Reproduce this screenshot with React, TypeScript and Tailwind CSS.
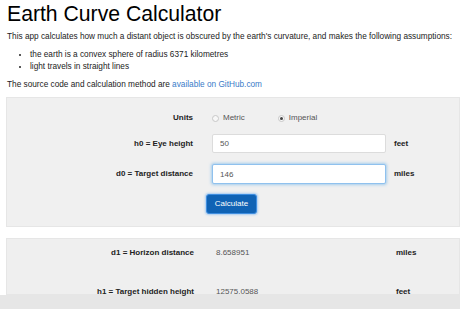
import React from 'react';

const FormRow: React.FC<{ label: string; unit: string; value: string; focused?: boolean; h: string }> = ({ label, unit, value, focused, h }) => (
  <div className={`flex items-center ${h}`}>
    <label className="w-[187px] shrink-0 text-right font-bold">{label}</label>
    <input
      readOnly
      value={value}
      className={`ml-[19px] h-full w-[174px] rounded-[2px] border bg-white px-[7px] text-[8px] text-[#555] outline-none ${
        focused ? 'border-[#8fc1ee] shadow-[0_0_3px_1px_rgba(102,175,233,0.55)]' : 'border-[#dcdcdc]'
      }`}
    />
    <span className="ml-[8px] font-bold">{unit}</span>
  </div>
);

const ResultRow: React.FC<{ label: string; value: string; unit: string }> = ({ label, value, unit }) => (
  <div className="flex items-center">
    <span className="w-[187px] shrink-0 text-right font-bold">{label}</span>
    <span className="ml-[22px] w-[180px] shrink-0 text-[#555]">{value}</span>
    <span className="font-bold">{unit}</span>
  </div>
);

export default function App() {
  return (
    <div className="h-[309px] w-[460px] overflow-hidden bg-white font-['Liberation_Sans',Arial,sans-serif] text-[8px] leading-[12px] text-[#222]">
      <div className="pl-[7px] pr-[4px]">
        <h1 className="pt-[2px] text-[21.2px] leading-[24px] text-black">Earth Curve Calculator</h1>
        <p className="mt-[5px] text-[8.25px]">
          This app calculates how much a distant object is obscured by the earth's curvature, and makes the following assumptions:
        </p>
        <ul className="mt-[6px] list-disc pl-[23px] text-[8.25px]">
          <li>the earth is a convex sphere of radius 6371 kilometres</li>
          <li>light travels in straight lines</li>
        </ul>
        <p className="mt-[6px] text-[8.25px]">
          The source code and calculation method are{' '}
          <a className="text-[#3a7bc8]">available on GitHub.com</a>
        </p>
      </div>

      <div className="ml-[6px] mt-[6px] h-[130px] border border-[#e6e6e6] bg-[#f0f0f0] pt-[13px]">
        <div className="flex h-[14px] items-center">
          <span className="w-[186px] shrink-0 text-right font-bold">Units</span>
          <span className="ml-[19px] flex items-center gap-[4px] text-[#555]">
            <span className="inline-block h-[7px] w-[7px] rounded-full border border-[#c8c8c8] bg-[#f7f7f7]" />
            Metric
          </span>
          <span className="ml-[33px] flex items-center gap-[4px] text-[#555]">
            <span className="flex h-[7px] w-[7px] items-center justify-center rounded-full border border-[#c8c8c8] bg-[#f7f7f7]">
              <span className="h-[3px] w-[3px] rounded-full bg-[#444]" />
            </span>
            Imperial
          </span>
        </div>
        <div className="-ml-px mt-[9px]">
          <FormRow label="h0 = Eye height" unit="feet" value="50" h="h-[19px]" />
        </div>
        <div className="-ml-px mt-[11px]">
          <FormRow label="d0 = Target distance" unit="miles" value="146" focused h="h-[20px]" />
        </div>
        <div className="ml-[199px] mt-[10px]">
          <button className="h-[20px] w-[51px] rounded-[3px] border border-[#3f8ee0] bg-[#1063b5] text-[8px] text-white shadow-[0_0_2px_1px_rgba(120,180,240,0.6)]">
            Calculate
          </button>
        </div>
      </div>

      <div className="ml-[6px] mt-[11px] flex h-[57px] flex-col gap-[27px] border border-[#e6e6e6] bg-[#efefef] pt-[8px]">
        <ResultRow label="d1 = Horizon distance" value="8.658951" unit="miles" />
        <ResultRow label="h1 = Target hidden height" value="12575.0588" unit="feet" />
      </div>
      <div className="h-[14px] bg-[#e6e6e6]" />
    </div>
  );
}
